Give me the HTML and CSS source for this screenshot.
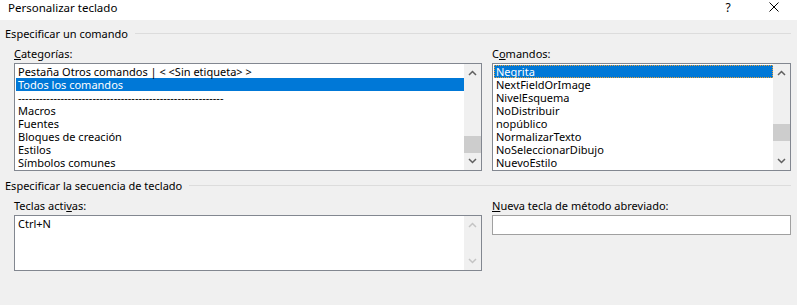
FILE: index.html
```html
<!DOCTYPE html>
<html lang="es">
<head>
  <meta charset="UTF-8" />
  <title>Personalizar teclado</title>
  <link rel="stylesheet" href="styles.css">
</head>
<body>

  <div class="titlebar">
    <span class="title">Personalizar teclado</span>
    <span class="tb-btn">?</span>
    <span class="tb-btn">
      <svg width="10" height="10" viewBox="0 0 10 10"><path d="M0.5 0.5 L9.5 9.5 M9.5 0.5 L0.5 9.5" stroke="#000" stroke-width="1" fill="none"/></svg>
    </span>
  </div>

  <div class="group-head">
    <span>Especificar un comando</span>
    <div class="rule"></div>
  </div>

  <div class="cols">
    <div class="field">
      <label><u>C</u>ategorías:</label>
      <div class="listbox">
        <ul class="items">
          <li>Pestaña Otros comandos | &lt; &lt;Sin etiqueta&gt; &gt;</li>
          <li class="sel">Todos los comandos</li>
          <li>----------------------------------------------------------</li>
          <li>Macros</li>
          <li>Fuentes</li>
          <li>Bloques de creación</li>
          <li>Estilos</li>
          <li>Símbolos comunes</li>
        </ul>
        <div class="scroll">
          <svg class="arrow" width="9" height="6" viewBox="0 0 9 6"><path d="M1 5 L4.5 1.5 L8 5" stroke="#606060" stroke-width="1.5" fill="none"/></svg>
          <div class="track"><div class="thumb thumb-cat"></div></div>
          <svg class="arrow" width="9" height="6" viewBox="0 0 9 6"><path d="M1 1 L4.5 4.5 L8 1" stroke="#606060" stroke-width="1.5" fill="none"/></svg>
        </div>
      </div>
    </div>

    <div class="field">
      <label>C<u>o</u>mandos:</label>
      <div class="listbox">
        <ul class="items">
          <li class="sel focus">Negrita</li>
          <li>NextFieldOrImage</li>
          <li>NivelEsquema</li>
          <li>NoDistribuir</li>
          <li>nopúblico</li>
          <li>NormalizarTexto</li>
          <li>NoSeleccionarDibujo</li>
          <li>NuevoEstilo</li>
        </ul>
        <div class="scroll">
          <svg class="arrow" width="9" height="6" viewBox="0 0 9 6"><path d="M1 5 L4.5 1.5 L8 5" stroke="#606060" stroke-width="1.5" fill="none"/></svg>
          <div class="track"><div class="thumb thumb-cmd"></div></div>
          <svg class="arrow" width="9" height="6" viewBox="0 0 9 6"><path d="M1 1 L4.5 4.5 L8 1" stroke="#606060" stroke-width="1.5" fill="none"/></svg>
        </div>
      </div>
    </div>
  </div>

  <div class="group-head second">
    <span>Especificar la secuencia de teclado</span>
    <div class="rule"></div>
  </div>

  <div class="cols">
    <div class="field">
      <label>Teclas acti<u>v</u>as:</label>
      <div class="keysbox">
        <ul class="items">
          <li>Ctrl+N</li>
        </ul>
        <div class="scroll disabled">
          <svg class="arrow" width="9" height="6" viewBox="0 0 9 6"><path d="M1 5 L4.5 1.5 L8 5" stroke="#c4c4c4" stroke-width="1.5" fill="none"/></svg>
          <div class="track"></div>
          <svg class="arrow" width="9" height="6" viewBox="0 0 9 6"><path d="M1 1 L4.5 4.5 L8 1" stroke="#c4c4c4" stroke-width="1.5" fill="none"/></svg>
        </div>
      </div>
    </div>

    <div class="field">
      <label><u>N</u>ueva tecla de método abreviado:</label>
      <div class="textbox"></div>
    </div>
  </div>

</body>
</html>
```

FILE: styles.css
```css
body {
  margin: 0;
  background-color: #f0f0f0;
  font-family: "Noto Sans", "Open Sans", sans-serif;
  font-size: 11px;
  color: #000;
  height: 305px;
  overflow: hidden;
}
.titlebar {
  display: flex;
  align-items: center;
  height: 20px;
  background-color: #fff;
}
.title {
  flex: 1;
  padding-left: 8px;
  margin-top: -6px;
  font-size: 11.5px;
}
.tb-btn {
  width: 46px;
  height: 20px;
  display: flex;
  align-items: center;
  justify-content: center;
  margin-top: -6px;
  font-size: 12px;
}
.group-head {
  display: flex;
  align-items: center;
  padding: 7px 6px 0 5px;
  height: 13px;
  line-height: 13px;
}
.group-head .rule {
  flex: 1;
  border-top: 1px solid #dcdcdc;
  margin-left: 7px;
}
.group-head.second {
  padding-top: 8px;
}
.cols {
  display: grid;
  grid-template-columns: 468px 299px;
  column-gap: 10px;
  padding-left: 14px;
}
label {
  display: block;
  line-height: 13px;
  margin-top: 7px;
  margin-bottom: 3px;
}
u {
  text-decoration-thickness: 1px;
  text-underline-offset: 1px;
}
.listbox, .keysbox {
  display: flex;
  background-color: #fff;
  border: 1px solid #828790;
  height: 106px;
}
.keysbox {
  height: 54px;
}
.items {
  list-style: none;
  margin: 0;
  padding: 1px 0 0 1px;
  flex: 1;
  overflow: hidden;
}
.items li {
  height: 13px;
  line-height: 13px;
  padding-left: 2px;
  white-space: nowrap;
}
.items li.sel {
  background-color: #0078d7;
  color: #fff;
}
.items li.focus {
  outline: 1px dotted #e9a13b;
  outline-offset: -1px;
}
.scroll {
  width: 17px;
  background-color: #f0f0f0;
  display: flex;
  flex-direction: column;
  align-items: center;
}
.arrow {
  margin: 6px 0;
}
.track {
  flex: 1;
  width: 100%;
  position: relative;
}
.thumb {
  position: absolute;
  left: 0;
  width: 100%;
  background-color: #cdcdcd;
}
.thumb-cat {
  top: 54px;
  height: 17px;
}
.thumb-cmd {
  top: 42px;
  height: 17px;
}
.textbox {
  height: 18px;
  background-color: #fff;
  border: 1px solid #a0a0a0;
}
```
